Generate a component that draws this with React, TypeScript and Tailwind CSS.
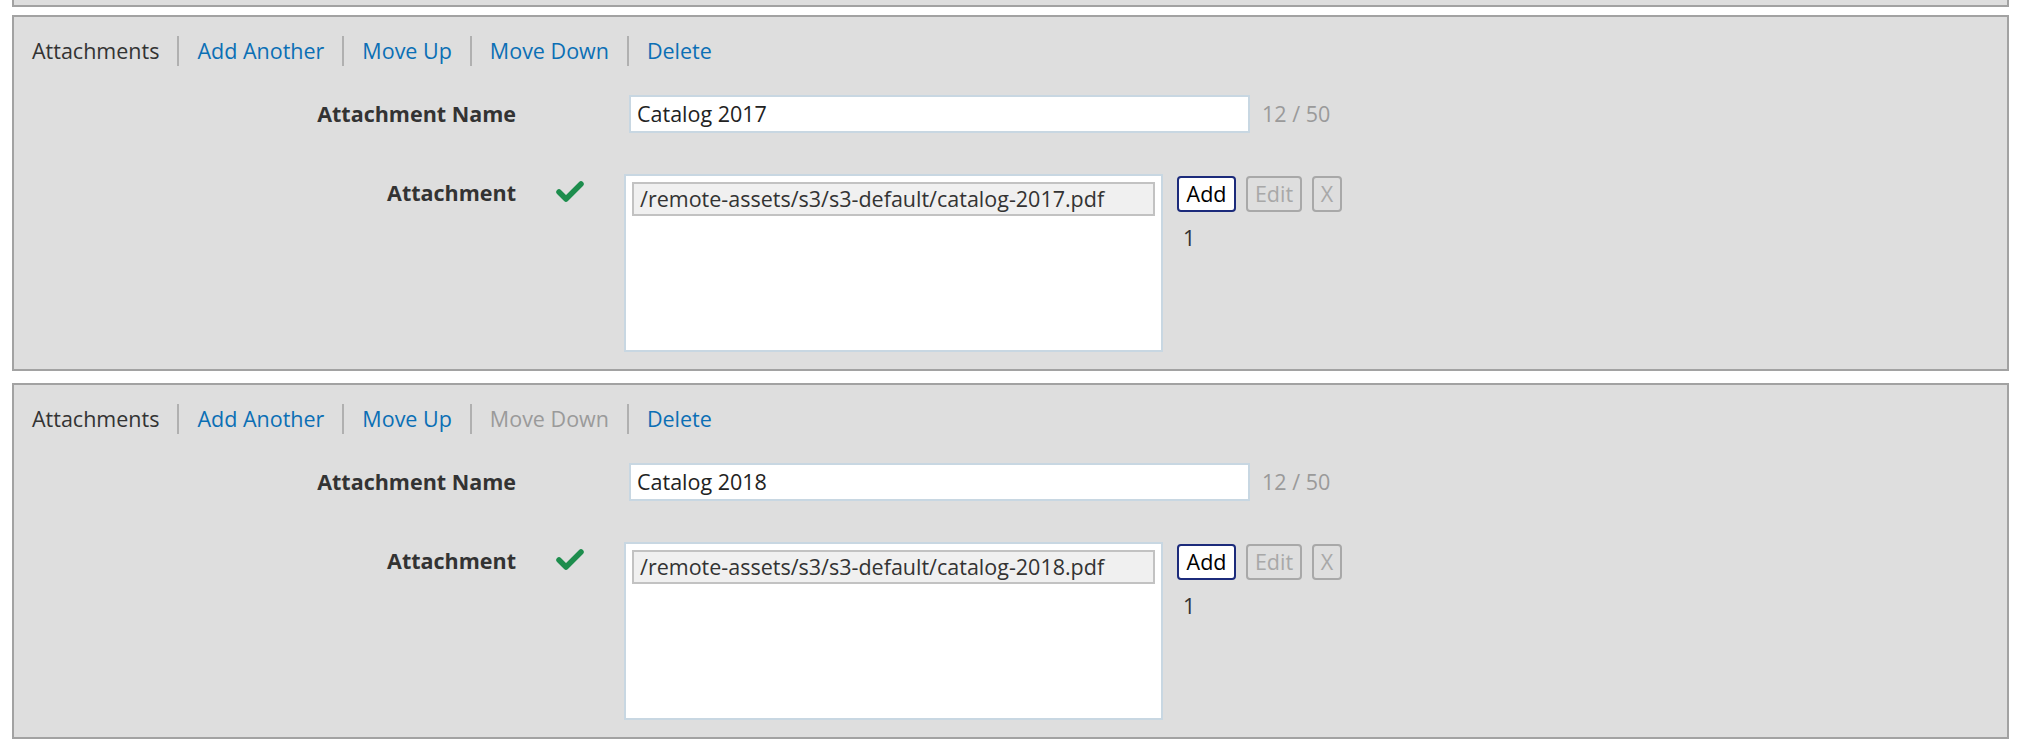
import React from 'react'

const font = { fontFamily: '"Open Sans", "Liberation Sans", sans-serif' }

function Check() {
  return (
    <svg width="30" height="24" viewBox="0 0 30 24" className="block">
      <polyline
        points="4,12 11,19 26,4"
        fill="none"
        stroke="#1d8d4d"
        strokeWidth="5.5"
        strokeLinecap="round"
        strokeLinejoin="round"
      />
    </svg>
  )
}

function Sep() {
  return <div className="mx-[18px] h-[30px] w-[2px] bg-[#b0b0b0]" />
}

function Panel({ name, path, canMoveDown }: { name: string; path: string; canMoveDown: boolean }) {
  return (
    <div className="mx-[12px] mr-[9px] border-2 border-[#a2a2a2] bg-[#dedede]">
      <div className="flex items-center pl-[18px] pt-[19px] text-[21.5px] leading-[28px]">
        <span className="text-[#333]">Attachments</span>
        <Sep />
        <a className="text-[#0b6fb5]">Add Another</a>
        <Sep />
        <a className="text-[#0b6fb5]">Move Up</a>
        <Sep />
        <a className={canMoveDown ? 'text-[#0b6fb5]' : 'text-[#9a9a9a]'}>Move Down</a>
        <Sep />
        <a className="text-[#0b6fb5]">Delete</a>
      </div>

      <div className="mt-[29px] flex items-center">
        <div className="w-[502px] text-right text-[21.5px] font-bold text-[#333]">Attachment Name</div>
        <div className="ml-[113px] flex h-[38px] w-[621px] items-center border-2 border-[#c8d7e2] bg-white pl-[6px] text-[21.5px] text-[#222]">
          {name}
        </div>
        <div className="ml-[12px] text-[21.5px] text-[#9a9a9a]">12 / 50</div>
      </div>

      <div className="mt-[41px] mb-[17px] flex items-start">
        <div className="mt-[5px] w-[502px] text-right text-[21.5px] font-bold leading-[28px] text-[#333]">Attachment</div>
        <div className="ml-[39px] mt-[6px]">
          <Check />
        </div>
        <div className="ml-[39px] h-[178px] w-[539px] border-2 border-[#c8d7e2] bg-white p-[6px]">
          <div className="flex h-[34px] items-center border-2 border-[#c2c2c2] bg-[#f0f0f0] pl-[6px] text-[21.5px] text-[#333]">
            {path}
          </div>
        </div>
        <div className="ml-[14px] flex flex-col">
          <div className="mt-[2px] flex gap-[10px] text-[21.5px]">
            <button className="flex h-[36px] w-[59px] items-center justify-center rounded-[4px] border-2 border-[#1c2b7b] bg-white text-black">
              Add
            </button>
            <button className="flex h-[36px] w-[56px] items-center justify-center rounded-[4px] border-2 border-[#a8a8a8] text-[#a8a8a8]">
              Edit
            </button>
            <button className="flex h-[36px] w-[30px] items-center justify-center rounded-[4px] border-2 border-[#a8a8a8] text-[#a8a8a8]">
              X
            </button>
          </div>
          <div className="mt-[10px] pl-[6px] text-[21.5px] text-[#333]">1</div>
        </div>
      </div>
    </div>
  )
}

export default function App() {
  return (
    <div className="min-h-screen bg-white" style={font}>
      <div className="mx-[12px] mr-[9px] h-[7px] border-x-2 border-b-2 border-[#a2a2a2] bg-[#dedede]" />
      <div className="mt-[8px]">
        <Panel name="Catalog 2017" path="/remote-assets/s3/s3-default/catalog-2017.pdf" canMoveDown />
      </div>
      <div className="mt-[12px]">
        <Panel name="Catalog 2018" path="/remote-assets/s3/s3-default/catalog-2018.pdf" canMoveDown={false} />
      </div>
    </div>
  )
}
